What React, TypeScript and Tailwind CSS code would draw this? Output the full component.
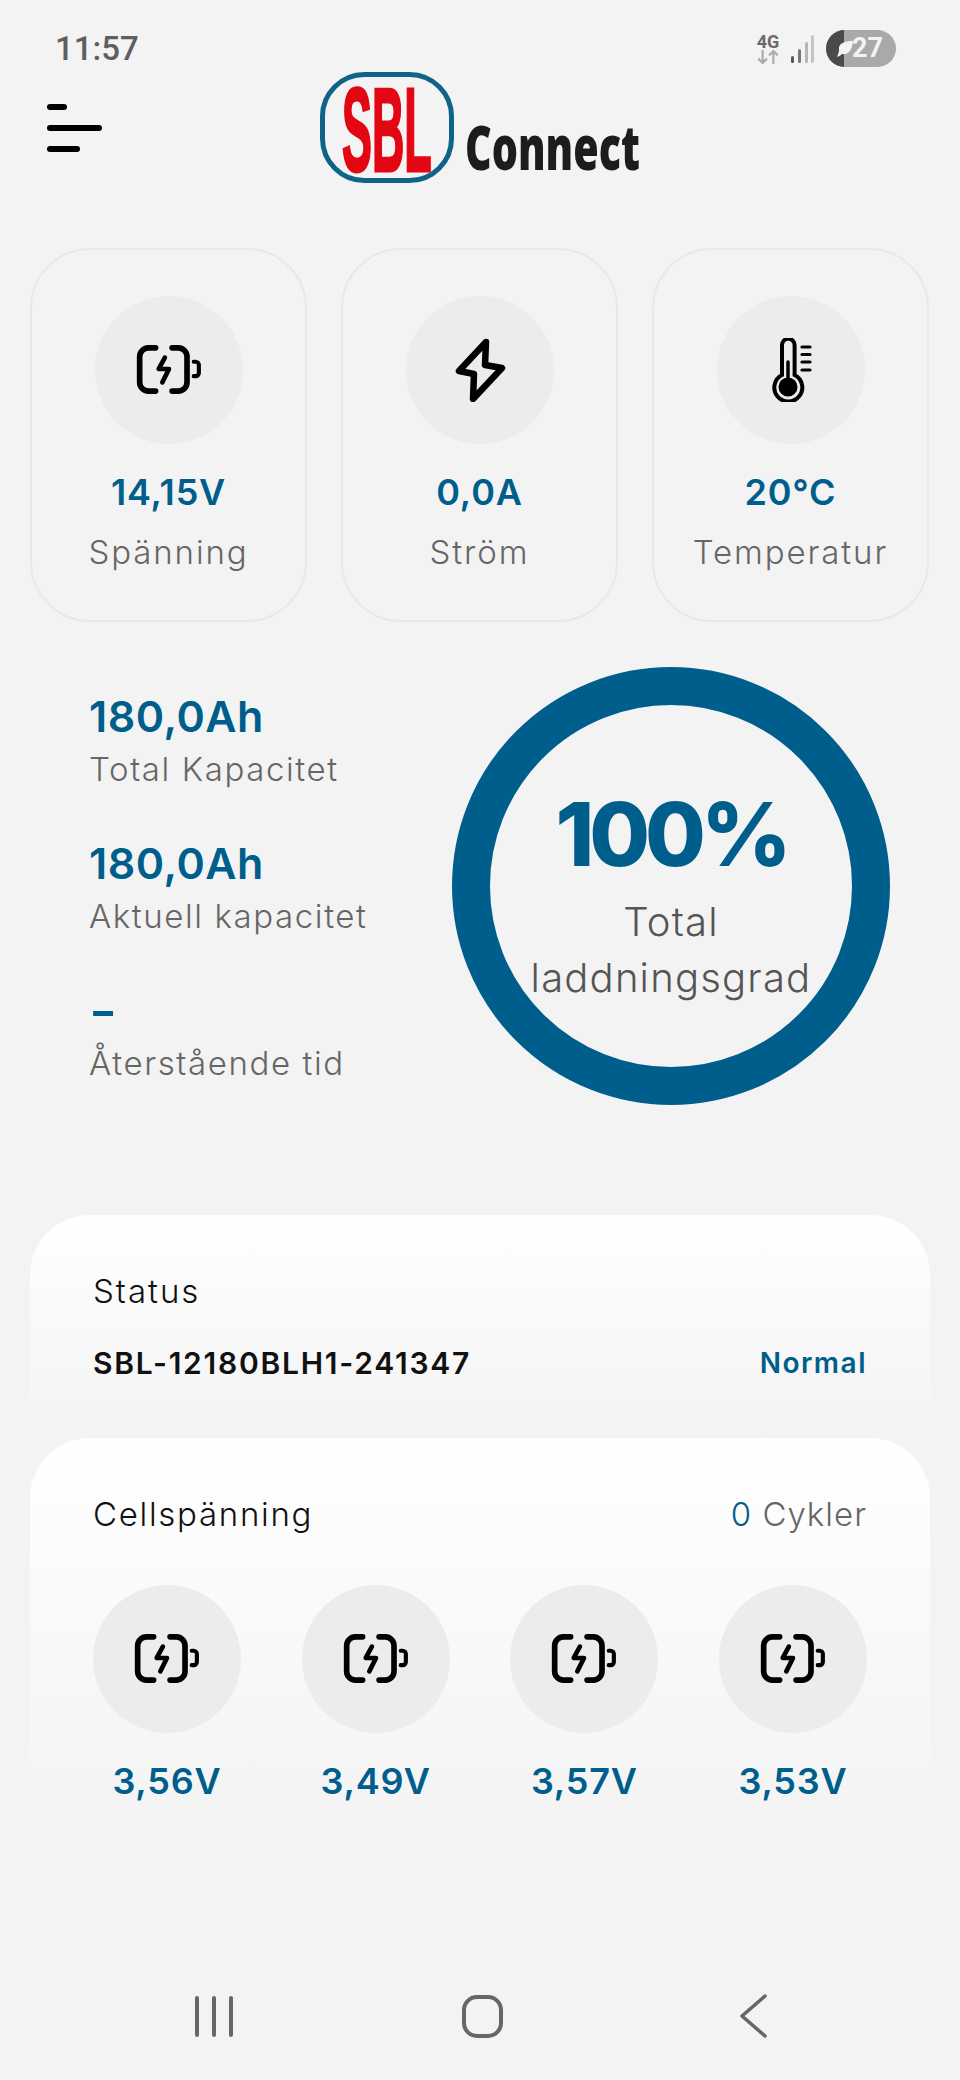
import React from 'react';

const FONT = "font-['Inter','Noto_Sans',sans-serif]";

const BatteryIcon = () => (
  <svg width="70" height="56" viewBox="44 54 68 54" fill="none" stroke="#000" strokeLinecap="round" strokeLinejoin="round">
    <path d="M65 59.500H58a8.500 8.500 0 0 0-8.500 8.500V93a8.500 8.500 0 0 0 8.500 8.500H65" strokeWidth="5.500" />
    <path d="M81 59.500H87a8.500 8.500 0 0 1 8.500 8.500V93a8.500 8.500 0 0 1-8.500 8.500H81" strokeWidth="5.500" />
    <path d="M102 73h2a3 3 0 0 1 3 3v8a3 3 0 0 1-3 3h-2" strokeWidth="4" />
    <path d="M74 69l-6 11h10l-6.500 13" strokeWidth="4.500" />
  </svg>
);

const BoltIcon = () => (
  <svg width="64" height="64" viewBox="47 48 64 64" fill="none" stroke="#000" strokeWidth="6.500" strokeLinejoin="round">
    <path d="M85 52L58 81L73 84L72 109L101 78L84 75Z" />
  </svg>
);

const ThermoIcon = () => (
  <svg width="64" height="64" viewBox="358 48 64 64" fill="none" stroke="#000" strokeLinecap="round">
    <path d="M381 85V55a6.300 6.300 0 0 1 12.600 0V85a14 14 0 1 1-12.600 0Z" strokeWidth="4" />
    <circle cx="387" cy="97" r="9.500" fill="#000" stroke="none" />
    <path d="M387 72V92" strokeWidth="3.500" />
    <path d="M401 57h8M401 64.500h8M401 72h8M401 80h8" strokeWidth="3.200" />
  </svg>
);

const IconCircle = ({ children }: { children: React.ReactNode }) => (
  <div className="w-[148px] h-[148px] rounded-full bg-[#ececec] flex items-center justify-center">{children}</div>
);

const stats = [
  { value: '14,15V', label: 'Spänning', icon: <BatteryIcon /> },
  { value: '0,0A', label: 'Ström', icon: <BoltIcon /> },
  { value: '20°C', label: 'Temperatur', icon: <ThermoIcon /> },
];

const capacity = [
  { value: '180,0Ah', label: 'Total Kapacitet' },
  { value: '180,0Ah', label: 'Aktuell kapacitet' },
  { value: '-', label: 'Återstående tid' },
];

const cells = ['3,56V', '3,49V', '3,57V', '3,53V'];

const Logo = () => (
  <svg className="overflow-visible" width="322" height="112" viewBox="320 72 322 112">
    <rect x="322.500" y="74.500" width="129" height="106" rx="42" fill="none" stroke="#0f6389" strokeWidth="5" />
    <text transform="translate(342 171) scale(0.38 1)" fontFamily="'Liberation Sans',sans-serif" fontWeight="700" fontSize="118" fill="#e30613" stroke="#e30613" strokeWidth="3">SBL</text>
    <text transform="translate(465 170) scale(0.665 1)" fontFamily="'Open Sans',sans-serif" fontWeight="800" fontSize="62" fill="#1c1c1c">Connect</text>
  </svg>
);

export default function App() {
  return (
    <div className={`${FONT} w-[960px] h-[2080px] bg-[#f3f3f3] overflow-hidden`}>
      {/* status bar */}
      <div className="flex items-center justify-between pl-[55px] pr-[64px] pt-[30px] h-[67px]">
        <span className="font-['Roboto',sans-serif] font-medium text-[33px] leading-[37px] text-[#5f5f5f]">11:57</span>
        <div className="flex items-center">
          <div className="flex flex-col items-center w-[26px] font-['Roboto',sans-serif]">
            <span className="text-[18px] leading-[16px] font-bold text-[#6a6a6a]">4G</span>
            <svg width="24" height="14" viewBox="0 0 22 13" fill="none" stroke="#ababab" strokeWidth="2">
              <path d="M6 0v12M2 8l4 4 4-4M16 13V1M12 5l4-4 4 4" />
            </svg>
          </div>
          <svg className="ml-[9px]" width="24" height="30" viewBox="0 0 24 30">
            <rect x="1" y="22" width="3" height="7" rx="1.500" fill="#555" />
            <rect x="8" y="15" width="3" height="14" rx="1.500" fill="#777" />
            <rect x="15" y="8" width="3" height="21" rx="1.500" fill="#b5b5b5" />
            <rect x="21" y="1" width="3" height="28" rx="1.500" fill="#c4c4c4" />
          </svg>
          <div className="ml-[12px] w-[70px] h-[37px] rounded-full bg-[#a9a9a9] overflow-hidden flex items-center relative">
            <div className="w-[18px] h-full bg-[#4a4a4a]" />
            <svg className="absolute left-[7px] top-[9px]" width="22" height="20" viewBox="0 0 22 20" fill="#f3f3f3">
              <path d="M4 18c3-1 4-2 5-3 6 1 10-3 11-13C12 2 5 4 6 11c0 2-1 4-2 7Z" />
            </svg>
            <span className="ml-[8px] text-[27px] leading-[37px] font-bold text-[#f3f3f3] font-['Roboto',sans-serif]">27</span>
          </div>
        </div>
      </div>

      {/* header */}
      <div className="flex items-start h-[119px] mt-[5px]">
        <div className="ml-[47px] mt-[32px] w-[55px] flex flex-col gap-[15px]">
          <div className="w-[20px] h-[6px] rounded-full bg-black" />
          <div className="w-[55px] h-[6px] rounded-full bg-black" />
          <div className="w-[33px] h-[6px] rounded-full bg-black" />
        </div>
        <div className="ml-[218px]"><Logo /></div>
      </div>

      {/* stat cards */}
      <div className="mt-[57px] px-[30px] flex gap-[34px]">
        {stats.map(s => (
          <div key={s.label} className="w-[277px] h-[374px] rounded-[60px] border-2 border-[#e8e8e8] flex flex-col items-center pt-[46px]">
            <IconCircle>{s.icon}</IconCircle>
            <p className="mt-[24px] text-[36px] leading-[48px] font-semibold tracking-[0.8px] text-[#005e8c]">{s.value}</p>
            <p className="mt-[12px] text-[33px] leading-[48px] font-light tracking-[1.9px] text-[#666]">{s.label}</p>
          </div>
        ))}
      </div>

      {/* capacity + ring */}
      <div className="mt-[45px] flex items-start">
        <div className="ml-[89px] w-[363px] pt-[24px] flex flex-col gap-[41px]">
          {capacity.map(c => (
            <div key={c.label}>
              <p className={c.value === '-'
                ? 'text-[43px] leading-[50px] font-bold text-[#005e8c] origin-left scale-x-[1.4]'
                : 'text-[43px] leading-[50px] font-semibold tracking-[0.5px] text-[#005e8c]'}>{c.value}</p>
              <p className="text-[33px] leading-[56px] font-light tracking-[1.6px] text-[#666]">{c.label}</p>
            </div>
          ))}
        </div>
        <div className="w-[438px] h-[438px] rounded-full border-[38px] border-[#005e8c] flex flex-col items-center">
          <p className="mt-[79px] text-[88px] leading-[100px] font-extrabold tracking-[-5px] text-[#005e8c]">100%</p>
          <p className="mt-[10px] text-[40px] leading-[56px] font-light tracking-[1.200px] text-[#555]">Total</p>
          <p className="text-[40px] leading-[56px] font-light tracking-[1.200px] text-[#555]">laddningsgrad</p>
        </div>
      </div>

      {/* status */}
      <div className="mt-[110px] mx-[30px] h-[223px] rounded-t-[60px] bg-gradient-to-b from-white to-[#f3f3f3] px-[63px] pt-[56px]">
        <p className="text-[33px] leading-[40px] font-light tracking-[2px] text-[#111]">Status</p>
        <div className="mt-[32px] flex items-center justify-between">
          <p className="text-[30px] leading-[40px] font-semibold tracking-[1.750px] text-[#111]">SBL-12180BLH1-241347</p>
          <p className="text-[28px] leading-[40px] font-semibold tracking-[1.500px] text-[#005e8c]">Normal</p>
        </div>
      </div>

      {/* cells */}
      <div className="mx-[30px] h-[392px] rounded-t-[60px] bg-gradient-to-b from-white to-[#f3f3f3] px-[63px] pt-[55px]">
        <div className="flex items-center justify-between">
          <p className="text-[33px] leading-[42px] font-light tracking-[1.700px] text-[#111]">Cellspänning</p>
          <p className="text-[33px] leading-[42px] font-light tracking-[1px] text-[#666]"><span className="text-[#005e8c]">0</span> Cykler</p>
        </div>
        <div className="mt-[50px] flex justify-between">
          {cells.map((c, i) => (
            <div key={i} className="w-[148px] flex flex-col items-center">
              <IconCircle><BatteryIcon /></IconCircle>
              <p className="mt-[24px] text-[36px] leading-[48px] font-semibold tracking-[0.8px] text-[#005e8c]">{c}</p>
            </div>
          ))}
        </div>
      </div>

      {/* nav bar */}
      <div className="mt-[164px] flex items-center h-[44px]">
        <div className="ml-[195px] flex gap-[13px]">
          <div className="w-[4px] h-[41px] rounded-full bg-[#666]" />
          <div className="w-[4px] h-[41px] rounded-full bg-[#666]" />
          <div className="w-[4px] h-[41px] rounded-full bg-[#666]" />
        </div>
        <div className="ml-[229px] w-[41px] h-[43px] rounded-[15px] border-[4px] border-[#666]" />
        <svg className="ml-[236px]" width="28" height="44" viewBox="0 0 28 44" fill="none" stroke="#666" strokeWidth="3.500" strokeLinecap="round" strokeLinejoin="round">
          <path d="M26 2L3 22L26 42" />
        </svg>
      </div>
    </div>
  );
}
